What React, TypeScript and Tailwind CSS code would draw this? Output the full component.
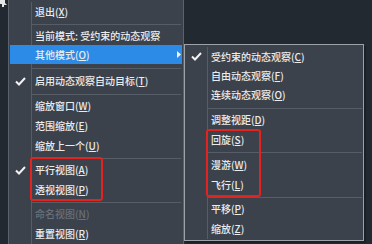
import React from 'react';

type Item = {
  text: string;
  hot?: string;
  check?: boolean;
  disabled?: boolean;
  active?: boolean;
  arrow?: boolean;
  h: string;
};

type Sep = { sep: true; h: string; pt: string };

const mainItems: (Item | Sep)[] = [
  { text: '退出', hot: 'X', h: 'h-[20px]' },
  { sep: true, h: 'h-[4px]', pt: 'pt-[2px]' },
  { text: '当前模式: 受约束的动态观察', h: 'h-[19px]' },
  { text: '其他模式', hot: 'O', active: true, arrow: true, h: 'h-[19px]' },
  { sep: true, h: 'h-[7px]', pt: 'pt-[4px]' },
  { text: '启用动态观察自动目标', hot: 'T', check: true, h: 'h-[20px]' },
  { sep: true, h: 'h-[5px]', pt: 'pt-[3px]' },
  { text: '缩放窗口', hot: 'W', h: 'h-[20px]' },
  { text: '范围缩放', hot: 'E', h: 'h-[20px]' },
  { text: '缩放上一个', hot: 'U', h: 'h-[20px]' },
  { sep: true, h: 'h-[4px]', pt: 'pt-[2px]' },
  { text: '平行视图', hot: 'A', check: true, h: 'h-[20px]' },
  { text: '透视视图', hot: 'P', h: 'h-[20px]' },
  { sep: true, h: 'h-[4px]', pt: 'pt-[2px]' },
  { text: '命名视图', hot: 'N', disabled: true, h: 'h-[20px]' },
  { text: '重置视图', hot: 'R', h: 'h-[20px]' },
];

const subItems: (Item | Sep)[] = [
  { text: '受约束的动态观察', hot: 'C', check: true, h: 'h-[19px]' },
  { text: '自由动态观察', hot: 'F', h: 'h-[19px]' },
  { text: '连续动态观察', hot: 'O', h: 'h-[19px]' },
  { sep: true, h: 'h-[6px]', pt: 'pt-[4px]' },
  { text: '调整视距', hot: 'D', h: 'h-[20px]' },
  { text: '回旋', hot: 'S', h: 'h-[20px]' },
  { sep: true, h: 'h-[5px]', pt: 'pt-[2px]' },
  { text: '漫游', hot: 'W', h: 'h-[20px]' },
  { text: '飞行', hot: 'L', h: 'h-[20px]' },
  { sep: true, h: 'h-[4px]', pt: 'pt-[2px]' },
  { text: '平移', hot: 'P', h: 'h-[20px]' },
  { text: '缩放', hot: 'Z', h: 'h-[20px]' },
];

const Check = () => (
  <svg width="11" height="9" viewBox="0 0 11 9">
    <polyline points="1,4.5 4,7.5 10,1" fill="none" stroke="#f2f2f2" strokeWidth="2" />
  </svg>
);

const MenuRows = ({ items, iconW }: { items: (Item | Sep)[]; iconW: string }) => (
  <>
    {items.map((it, i) => {
      if ('sep' in it) {
        return (
          <div key={i} className={`flex ${it.h}`}>
            <div className={iconW} />
            <div className={`flex-1 border-l border-[#565d67] ${it.pt}`}>
              <div className="h-px bg-[#565d67] mr-[1px]" />
            </div>
          </div>
        );
      }
      return (
        <div
          key={i}
          className={`relative flex ${it.h} ${it.active ? 'bg-[#2b8be6]' : ''} ${
            it.disabled ? 'text-[#69707a]' : 'text-[#ececec]'
          }`}
        >
          <div className={`${iconW} flex items-center justify-center`}>{it.check && <Check />}</div>
          <div
            className={`flex-1 flex items-center pl-[3px] border-l ${
              it.active ? 'border-transparent' : 'border-[#565d67]'
            }`}
          >
            <span className="whitespace-nowrap">
              {it.text}
              {it.hot && (
                <>
                  (<span className="underline underline-offset-1">{it.hot}</span>)
                </>
              )}
            </span>
          </div>
          {it.arrow && (
            <svg className="absolute right-[1px] top-[6px]" width="4" height="7" viewBox="0 0 4 7">
              <polygon points="0,0 4,3.5 0,7" fill="#f2f2f2" />
            </svg>
          )}
        </div>
      );
    })}
  </>
);

export default function App() {
  return (
    <div
      className="relative w-[372px] h-[244px] overflow-hidden bg-[#222931] text-[10px] leading-none font-medium"
      style={{ fontFamily: '"Noto Sans CJK SC", "Noto Sans", sans-serif' }}
    >
      {/* cursor fragment top-left */}
      <svg className="absolute left-0 top-0" width="7" height="8" viewBox="0 0 7 8">
        <polygon points="0,0 5,0 5,3 7,5 4,5 4,7 2,7 2,4 0,4" fill="#e6e6e6" />
      </svg>

      {/* main context menu */}
      <div className="absolute left-[8px] top-0 w-[176px] h-[250px] bg-[#3b424c] border-l border-r border-[#5b626c] pt-[2px] px-[1px]">
        <MenuRows items={mainItems} iconW="w-[21px]" />
      </div>

      {/* submenu */}
      <div className="absolute left-[184px] top-[44px] w-[180px] h-[197px] bg-[#3b424c] border border-[#9da2a8] pt-[2px] shadow-[2px_2px_0_#1b2027]">
        <MenuRows items={subItems} iconW="w-[22px]" />
      </div>

      {/* red annotation boxes */}
      <div className="absolute left-[30px] top-[157px] w-[73px] h-[44px] border-2 border-[#e3231f] rounded-[3px]" />
      <div className="absolute left-[206px] top-[129px] w-[55px] h-[68px] border-2 border-[#e3231f] rounded-[3px]" />
    </div>
  );
}
